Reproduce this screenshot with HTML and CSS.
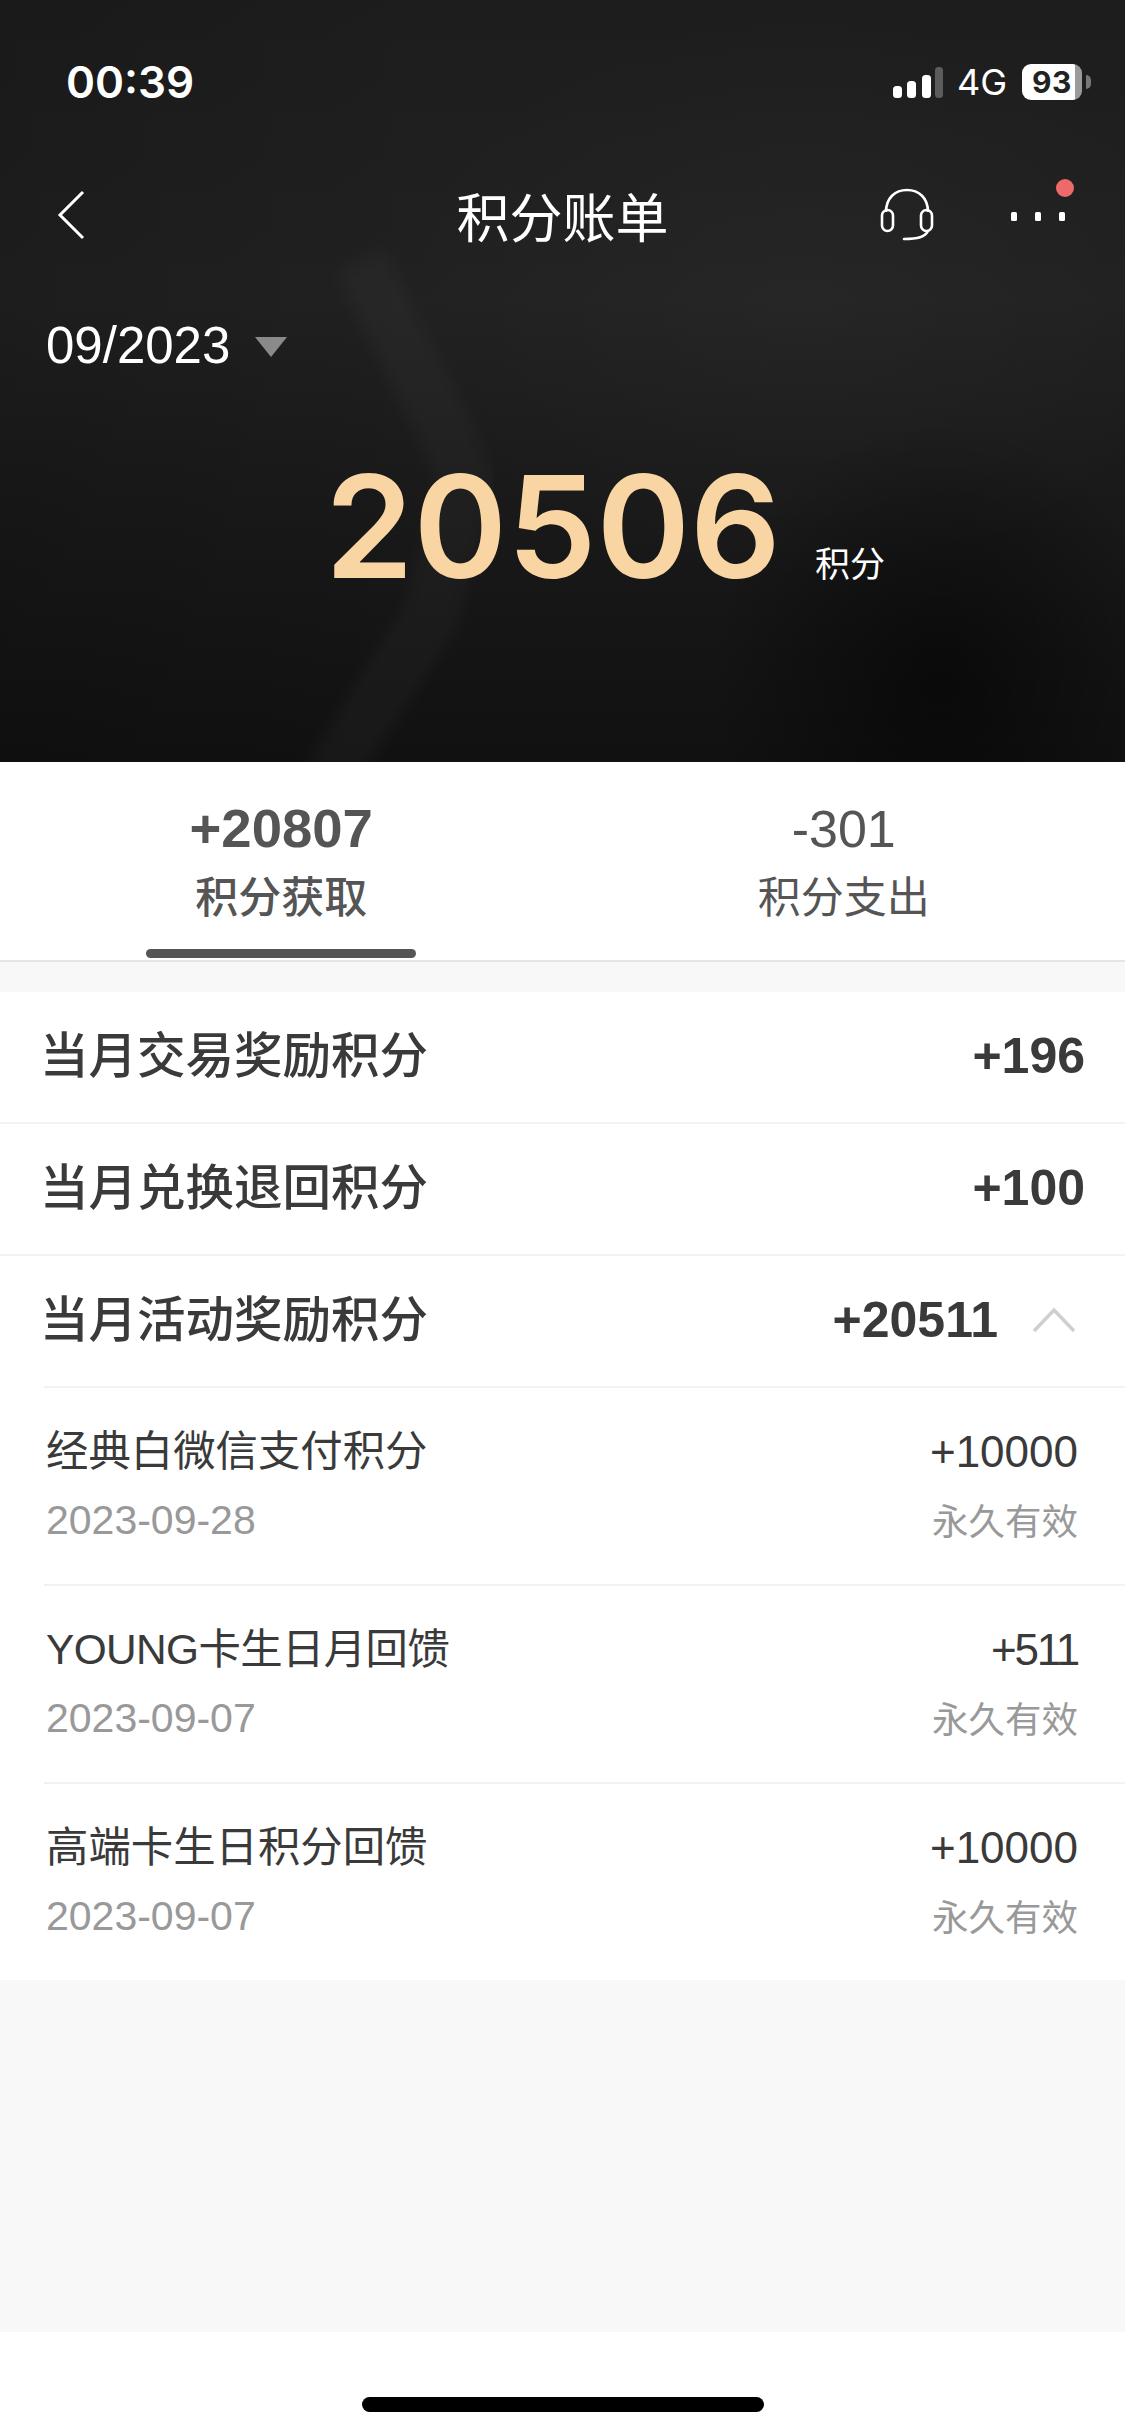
FILE: index.html
```html
<!DOCTYPE html>
<html lang="zh-CN">
<head>
<meta charset="utf-8">
<title>积分账单</title>
<link rel="stylesheet" href="styles.css">
</head>
<body>
<div class="page">
  <header class="hero">
    <svg class="hero-art" width="1125" height="762" viewBox="0 0 1125 762" aria-hidden="true">
      <defs><filter id="soft" x="-20%" y="-20%" width="140%" height="140%"><feGaussianBlur stdDeviation="7"/></filter></defs>
      <path d="M360 262 L436 412 L466 480 L430 618 L330 775" fill="none" stroke="#fff" stroke-opacity=".028" stroke-width="52" filter="url(#soft)"/>
    </svg>
    <div class="status">
      <span class="time">00:39</span>
      <div class="status-right">
        <svg class="signal" width="50" height="31" viewBox="0 0 50 31"><rect x="0" y="19" width="9" height="12" rx="3.5" fill="#fff"/><rect x="14" y="14" width="9" height="17" rx="3.5" fill="#fff"/><rect x="29" y="8" width="9" height="23" rx="3.5" fill="#fff"/><rect x="42" y="0" width="8" height="31" rx="3.5" fill="#5c5c5c"/></svg>
        <span class="net">4G</span>
        <div class="battery"><span class="battery-level">93</span></div>
        <span class="battery-nub"></span>
      </div>
    </div>
    <nav class="navbar">
      <svg class="back" width="30" height="50" viewBox="0 0 30 50"><path d="M27 2 L4 25 L27 48" fill="none" stroke="#fff" stroke-width="3"/></svg>
      <h1 class="title">积分账单</h1>
      <div class="nav-actions">
        <svg class="headset" width="54" height="54" viewBox="0 0 54 54" fill="none" stroke="#fff" stroke-width="2.6"><path d="M6 24 C6 10 15 2 27 2 C39 2 48 10 48 24"/><rect x="2" y="22" width="11" height="21" rx="5.5"/><rect x="41" y="22" width="11" height="21" rx="5.5"/><path d="M48 43 C45 49 38 51 24 51" stroke-linecap="round"/></svg>
        <div class="more">
          <i></i><i></i><i></i>
          <b class="dot"></b>
        </div>
      </div>
    </nav>
    <div class="month"><span>09/2023</span><i class="caret"></i></div>
    <div class="amount"><span class="number">20506</span><span class="unit">积分</span></div>
  </header>

  <section class="tabs">
    <div class="tab active"><div class="tab-value">+20807</div><div class="tab-label">积分获取</div></div>
    <div class="tab"><div class="tab-value">-301</div><div class="tab-label">积分支出</div></div>
  </section>

  <main class="list">
    <div class="row"><span class="row-name">当月交易奖励积分</span><span class="row-value">+196</span></div>
    <div class="row"><span class="row-name">当月兑换退回积分</span><span class="row-value">+100</span></div>
    <div class="row row-open"><span class="row-name">当月活动奖励积分</span><span class="row-end"><span class="row-value">+20511</span><svg class="chev" width="44" height="26" viewBox="0 0 44 26"><path d="M2 24 L22 3 L42 24" fill="none" stroke="#cfcfcf" stroke-width="3.5"/></svg></span></div>
    <div class="subs">
      <div class="sub">
        <div class="sub-line"><span class="sub-name">经典白微信支付积分</span><span class="sub-value">+10000</span></div>
        <div class="sub-line meta"><span class="sub-date">2023-09-28</span><span class="sub-valid">永久有效</span></div>
      </div>
      <div class="sub">
        <div class="sub-line"><span class="sub-name name-tight">YOUNG卡生日月回馈</span><span class="sub-value tight">+511</span></div>
        <div class="sub-line meta"><span class="sub-date">2023-09-07</span><span class="sub-valid">永久有效</span></div>
      </div>
      <div class="sub">
        <div class="sub-line"><span class="sub-name">高端卡生日积分回馈</span><span class="sub-value">+10000</span></div>
        <div class="sub-line meta"><span class="sub-date">2023-09-07</span><span class="sub-valid">永久有效</span></div>
      </div>
    </div>
  </main>

  <div class="filler"></div>
  <footer class="home"><span class="home-bar"></span></footer>
</div>
</body>
</html>
```
FILE: styles.css
```css
* { box-sizing: border-box; margin: 0; padding: 0; }
html, body { width: 1125px; height: 2436px; overflow: hidden; background: #fff; }
body { font-family: "Liberation Sans", "Noto Sans CJK SC", sans-serif; }
.page { width: 1125px; height: 2436px; display: flex; flex-direction: column; background: #f8f8f8; }

.hero {
  height: 762px; color: #fff; display: flex; flex-direction: column; position: relative;
  background:
    radial-gradient(ellipse 230px 260px at 940px 680px, rgba(0,0,0,.5), transparent),
    radial-gradient(ellipse 420px 300px at 800px 300px, rgba(255,255,255,.025), transparent),
    linear-gradient(90deg, rgba(0,0,0,.12), transparent 40%),
    linear-gradient(180deg, #1d1d1d 0, #212121 300px, #1a1a1a 480px, #111 762px);
}
.hero-art { position: absolute; left: 0; top: 0; pointer-events: none; }
.hero > :not(.hero-art) { position: relative; }
.status { height: 164px; padding: 0 34px 0 66px; display: flex; align-items: center; justify-content: space-between; }
.time { font: 600 44px Inter, sans-serif; }
.status-right { display: flex; align-items: center; }
.signal { margin-right: 14px; }
.net { font: 400 36px Inter, sans-serif; margin-right: 15px; }
.battery { width: 60px; height: 36px; border-radius: 9px; background: linear-gradient(90deg, #fff 0 88%, #9a9a9a 88%); display: flex; align-items: center; padding-left: 10px; }
.battery-level { font: 700 30px Inter, sans-serif; color: #222; letter-spacing: .5px; }
.battery-nub { width: 5px; height: 14px; margin-left: 4px; border-radius: 0 7px 7px 0; background: #777; }

.navbar { height: 102px; padding: 0 60px 0 56px; display: flex; align-items: center; justify-content: space-between; }
.title { position: absolute; left: 0; right: 0; text-align: center; font: 400 53px/1 "Noto Sans CJK SC", sans-serif; }
.nav-actions { display: flex; align-items: center; gap: 77px; }
.more { display: flex; gap: 18px; position: relative; margin-top: 2px; }
.more i { width: 6px; height: 9px; background: #fff; border-radius: 1.5px; }
.dot { position: absolute; right: -9px; top: -33px; width: 18px; height: 18px; border-radius: 50%; background: #ee6a6a; }

.month { height: 158px; padding-left: 46px; display: flex; align-items: center; font-size: 51px; gap: 25px; }
.caret { width: 0; height: 0; border-left: 16px solid transparent; border-right: 16px solid transparent; border-top: 20px solid #8a8a8a; margin-top: 4px; }

.amount { padding: 12px 0 0 325px; display: flex; align-items: flex-end; gap: 34px; }
.number { font: 600 142px/180px Inter, sans-serif; color: #f8d5a2; }
.unit { font: 400 35px/1 "Noto Sans CJK SC", sans-serif; padding-bottom: 37px; }

.tabs { height: 200px; display: grid; grid-template-columns: 1fr 1fr; border-bottom: 2px solid #e5e5e5; text-align: center; color: #555; padding-top: 37px; background: #fff; }
.tab { position: relative; }
.tab-value { font-size: 52px; line-height: 60px; }
.tab-label { font: 400 43px/60px "Noto Sans CJK SC", sans-serif; margin-top: 5px; }
.active .tab-value { font-size: 54.5px; font-weight: 700; }
.active .tab-label { font-weight: 500; }
.active::after { content: ""; position: absolute; left: 146px; width: 270px; bottom: 2px; height: 9px; border-radius: 5px; background: #555; }

.list { background: #fff; margin-top: 30px; color: #3a3a3a; }
.row { height: 132px; padding: 0 40px 9px 40px; display: flex; align-items: center; justify-content: space-between; border-bottom: 2px solid #f2f2f2; }
.row-open { height: 130px; border-bottom: 0; }
.row-name { font: 500 48.5px/1 "Noto Sans CJK SC", sans-serif; }
.row-value { font-size: 50px; font-weight: 700; margin-top: 6px; }
.row-end { display: flex; align-items: center; gap: 34px; margin-right: 9px; }
.chev { margin-top: 6px; }

.subs { margin-left: 44px; }
.sub { height: 198px; padding: 34px 47px 0 2px; border-top: 2px solid #f2f2f2; }
.sub-line { display: flex; align-items: center; justify-content: space-between; height: 60px; }
.meta { margin-top: 8px; color: #999; }
.sub-name { font: 400 42.4px/1 "Liberation Sans", "Noto Sans CJK SC", sans-serif; }
.name-tight { letter-spacing: -.6px; }
.sub-value { font-size: 44px; }
.tight { letter-spacing: -2.2px; }
.sub-date { font-size: 41px; }
.sub-valid { font: 400 36.5px/1 "Noto Sans CJK SC", sans-serif; }

.filler { flex: 1; background: #f8f8f8; }
.home { height: 104px; background: #fff; display: flex; justify-content: center; padding-top: 65px; }
.home-bar { width: 402px; height: 15px; border-radius: 8px; background: #000; }
```
